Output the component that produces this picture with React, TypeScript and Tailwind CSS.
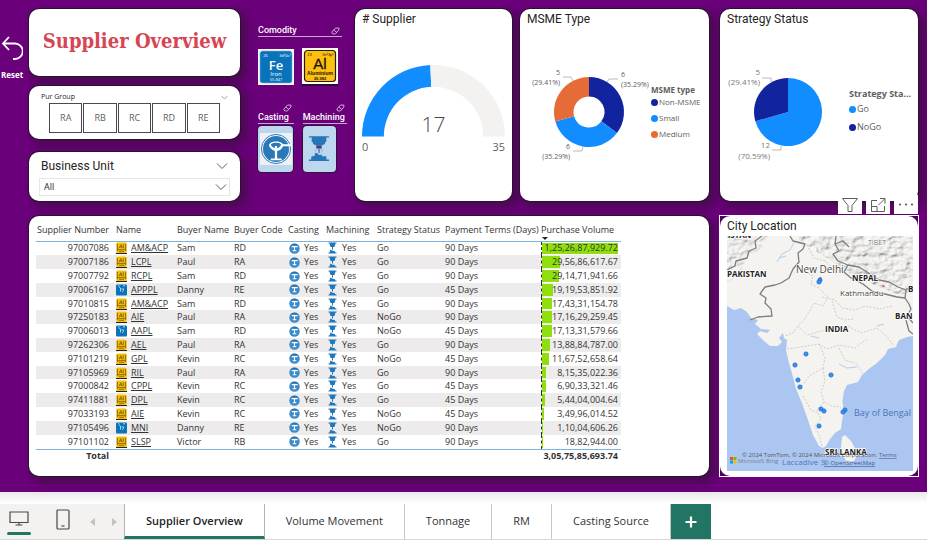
import type { ReactNode } from "react";

const CARD =
  "rounded-[10px] bg-white shadow-[0_0_0_1px_#2a1230,5px_5px_10px_2px_rgba(40,20,40,0.5)]";
const HEADING = "font-[Roboto,sans-serif] text-[12px] leading-[16px] font-normal text-[#252423]";

type Supplier = {
  id: string;
  metal: "al" | "fe";
  name: string;
  buyer: string;
  code: string;
  status: string;
  terms: string;
  volume: string;
};

const row = (
  id: string,
  metal: "al" | "fe",
  name: string,
  buyer: string,
  code: string,
  status: string,
  terms: string,
  volume: string,
): Supplier => ({ id, metal, name, buyer, code, status, terms, volume });

const suppliers: Supplier[] = [
  row("97007086", "al", "AM&ACP", "Sam", "RD", "Go", "90 Days", "1,25,26,87,929.72"),
  row("97007186", "al", "LCPL", "Paul", "RA", "Go", "90 Days", "29,56,86,617.67"),
  row("97007792", "al", "RCPL", "Sam", "RD", "Go", "90 Days", "29,14,71,941.66"),
  row("97006167", "fe", "APPPL", "Danny", "RE", "Go", "45 Days", "19,19,53,851.92"),
  row("97010815", "al", "AM&ACP", "Sam", "RD", "Go", "90 Days", "17,43,31,154.78"),
  row("97250183", "al", "AIE", "Paul", "RA", "NoGo", "90 Days", "17,16,29,259.45"),
  row("97006013", "fe", "AAPL", "Sam", "RD", "NoGo", "45 Days", "17,13,31,579.66"),
  row("97262306", "al", "AEL", "Paul", "RA", "Go", "90 Days", "13,88,84,787.00"),
  row("97101219", "al", "GPL", "Kevin", "RC", "NoGo", "45 Days", "11,67,52,658.64"),
  row("97105969", "al", "RIL", "Paul", "RA", "Go", "90 Days", "8,15,35,022.36"),
  row("97000842", "al", "CPPL", "Kevin", "RC", "Go", "45 Days", "6,90,33,321.46"),
  row("97411881", "al", "DPL", "Kevin", "RC", "Go", "45 Days", "5,44,04,004.64"),
  row("97033193", "al", "AIE", "Kevin", "RC", "NoGo", "45 Days", "3,49,96,014.52"),
  row("97105496", "fe", "MNI", "Danny", "RE", "NoGo", "90 Days", "1,10,04,606.26"),
  row("97101102", "al", "SLSP", "Victor", "RB", "Go", "90 Days", "18,82,944.00"),
];

const MAX_VOLUME = 1252687929.72;
const toNumber = (value: string) => Number(value.replace(/,/g, ""));

/* ---------- icons ---------- */

function Chevron({ className }: { className: string }) {
  return (
    <svg viewBox="0 0 12 8" className={className} fill="none" stroke="#605e5c" aria-hidden="true">
      <path d="M1 1.5 6 6.5 11 1.5" />
    </svg>
  );
}

function Eraser() {
  return (
    <svg viewBox="0 0 10 9" className="h-[8px] w-[9px] shrink-0" fill="none" stroke="#e6d6ea" strokeWidth="0.9" aria-hidden="true">
      <path d="M1 5.6 5 1.2h3.800v2.200L4.800 7.800H2.400L1 6.800zM3 3.400l3.400 2.600" />
    </svg>
  );
}

function MetalIcon({ metal }: { metal: "al" | "fe" }) {
  if (metal === "fe") {
    return (
      <svg viewBox="0 0 11 12" className="h-[12px] w-[11px]" aria-hidden="true">
        <rect width="11" height="11" y="0.500" rx="1" fill="#0b74b8" />
        <path d="M3 3l1.500 1v3.500M6 8l1.500-1.500V4.500M5.500 5h1.500M2 1.800h1.500M7 1.800h2" stroke="#b7def5" strokeWidth="0.900" fill="none" />
      </svg>
    );
  }
  return (
    <svg viewBox="0 0 11 12" className="h-[12px] w-[11px]" aria-hidden="true">
      <rect width="11" height="12" fill="#fff" />
      <rect x="0.3" y="0.4" width="10.4" height="10.6" rx="1" fill="#f4bd0c" />
      <path d="M3.2 6.2 4.8 2.6l1.5 3.600M3.900 5h2M7.300 2.200v4M1.800 7.600h7.400M3 9.300h5M1.400 2v7M9.600 2v7" stroke="#6a5000" strokeWidth="0.700" fill="none" />
      <path d="M0 11.500h11" stroke="#222" />
    </svg>
  );
}

function CastingSmall() {
  return (
    <svg viewBox="0 0 12 12" className="h-[11px] w-[11px]" aria-hidden="true">
      <circle cx="6" cy="6" r="5.700" fill="#3b8bcb" />
      <path d="M3 4h6.500M6 4.500v3.500M4 8.500h4" stroke="#fff" strokeWidth="1.200" fill="none" />
      <path d="M2.500 2.500C4 1.300 8 1.300 9.500 2.500" stroke="#1b66a6" strokeWidth="0.800" fill="none" />
    </svg>
  );
}

function MachiningSmall() {
  return (
    <svg viewBox="0 0 9 12" className="h-[12px] w-[9px]" aria-hidden="true">
      <path d="M0.500 0.500h8v1h-1L6.500 5H2.500L1.500 1.500h-1zM4 5h1v2.500H4zM2.400 7.500l2.200 1.200 2 .2.900 1.600h1v1h-8v-1h1z" fill="#1f78bd" />
    </svg>
  );
}

function IronTile() {
  return (
    <svg viewBox="0 0 36 36" className="size-[36px]" role="img" aria-label="Iron">
      <rect width="36" height="36" fill="#f4f8fb" />
      <rect x="2" y="2" width="32" height="32" rx="2.500" fill="#0873ba" stroke="#7db9de" strokeWidth="0.600" />
      <g fill="#fff" textAnchor="middle" fontFamily="'Open Sans', sans-serif">
        <text x="7.500" y="8" fontSize="4">26</text>
        <text x="27" y="8" fontSize="4">3d⁶4s²</text>
        <text x="18" y="20.500" fontSize="13" fontWeight="600">Fe</text>
        <text x="18" y="27" fontSize="6">Iron</text>
        <text x="18" y="32" fontSize="4">55.847</text>
      </g>
    </svg>
  );
}

function AluminiumTile() {
  return (
    <svg viewBox="0 0 36 38" className="h-[38px] w-[36px]" role="img" aria-label="Aluminium">
      <path d="M0 36h36v2H0z" fill="#2b0a33" />
      <rect width="36" height="36" fill="#fdfdf6" />
      <rect x="2.500" y="2.500" width="31" height="31" rx="3" fill="#fdbf10" stroke="#241c05" strokeWidth="1.200" />
      <g fill="#17120a" textAnchor="middle" fontFamily="'Liberation Sans', Arial, sans-serif">
        <text x="7.500" y="8" fontSize="4">13</text>
        <text x="26" y="8" fontSize="4">3s²3p¹</text>
        <text x="18" y="21" fontSize="15" stroke="#17120a" strokeWidth="0.300">Al</text>
        <text x="18" y="27" fontSize="5" fontWeight="700">Aluminium</text>
        <text x="18" y="32" fontSize="4" fontWeight="700">26.982</text>
      </g>
    </svg>
  );
}

function CastingPicture() {
  return (
    <svg viewBox="0 0 34 34" className="size-[32px]" role="img" aria-label="Casting">
      <rect width="34" height="34" fill="#eef2f6" />
      <circle cx="17" cy="17" r="15.500" fill="none" stroke="#2a78b8" />
      <circle cx="17" cy="17" r="13.800" fill="#2a78b8" />
      <path d="M17 9c5 0 7 2 7.500 3H33v2h-8.500c-1.500 3.500-4 4.500-6.300 5v8H23v2H11.500v-2h4.300v-8c-3-.8-5.500-3-6.300-6C10 10.500 13 9 17 9z" fill="#fff" />
      <path d="M17 10.300c3.500 0 5 1 5.500 2-.6 2-2 3.400-4.300 3.900v-2.500h-2.400v2.500c-2-.6-3.800-2-4.300-3.900.8-1.300 3-2 5.500-2z" fill="#2a78b8" />
    </svg>
  );
}

function MachiningPicture() {
  return (
    <svg viewBox="0 0 24 30" className="h-[28px] w-[22px]" role="img" aria-label="Machining">
      <path d="M1 1h22v1.500h-3V7l-1.500 1v1.500L15.500 11h-7L5.500 9.500V8L4 7V2.500H1zM3.500 26.500v-3l4-1.500v-3l3 1 1.500 1.500 3-.5v2h5v3.500H23V28H1v-1.500z" fill="#2577b9" />
      <path d="M9 11h6v3.500H9z" fill="#4a3f7a" />
      <path d="M11.500 14.500h1.200V19h-1.200zM9 15.500l-1 2M15 15.500l1 2" fill="#4a5f8a" stroke="#6f95bd" strokeWidth="0.700" />
    </svg>
  );
}

/* ---------- cards ---------- */

function ImageFilters() {
  return (
    <div className="min-w-0 pt-[16px] pl-[10px] font-[Roboto,sans-serif] text-[9px] leading-[11px] font-medium text-white">
      <div className="flex w-[84px] items-center justify-between border-b border-[#c9a5d1] pr-[2px]">
        <span>Comodity</span>
        <Eraser />
      </div>
      <div className="mt-[11px] flex gap-[8px]">
        <button type="button"><IronTile /></button>
        <button type="button"><AluminiumTile /></button>
      </div>
      <div className="mt-[18px] flex gap-[9px]">
        <div className="flex w-[37px] flex-col">
          <div className="flex justify-end pr-[2px]"><Eraser /></div>
          <span className="border-b border-[#c9a5d1]">Casting</span>
          <button type="button" className="mt-[2px] flex h-[46px] w-[35px] items-center justify-center rounded-[4px] bg-[#bdd7ee] shadow-[0_0_0_1px_#35103f]">
            <CastingPicture />
          </button>
        </div>
        <div className="flex w-[46px] flex-col">
          <div className="flex justify-end pr-[2px]"><Eraser /></div>
          <span className="border-b border-[#c9a5d1]">Machining</span>
          <button type="button" className="mt-[2px] flex h-[46px] w-[33px] items-center justify-center rounded-[4px] bg-[#bdd7ee] shadow-[0_0_0_1px_#35103f]">
            <MachiningPicture />
          </button>
        </div>
      </div>
    </div>
  );
}

function polar(cx: number, cy: number, r: number, turn: number) {
  const a = turn * 2 * Math.PI;
  return `${(cx + r * Math.sin(a)).toFixed(2)} ${(cy - r * Math.cos(a)).toFixed(2)}`;
}

function slice(cx: number, cy: number, outer: number, inner: number, from: number, to: number) {
  const large = to - from > 0.5 ? 1 : 0;
  return `M${polar(cx, cy, outer, from)}A${outer} ${outer} 0 ${large} 1 ${polar(cx, cy, outer, to)}L${polar(cx, cy, inner, to)}A${inner} ${inner} 0 ${large} 0 ${polar(cx, cy, inner, from)}Z`;
}

function SupplierGauge() {
  const split = -0.25 + (17 / 35) * 0.5;
  return (
    <section className={`${CARD} min-w-0 px-[6px] pt-[2px]`}>
      <h2 className={`${HEADING} pl-[1px]`}># Supplier</h2>
      <svg viewBox="0 0 146 106" className="mt-[29px] w-full" role="img" aria-label="17 of 35 suppliers" fontFamily="'Open Sans', sans-serif">
        <path d={slice(73, 81, 72, 50, -0.25, split)} fill="#118dff" />
        <path d={slice(73, 81, 72, 50, split, 0.25)} fill="#f3f2f1" />
        <text x="73" y="77" fontSize="21" fontWeight="300" textAnchor="middle" fill="#444">17</text>
        <text x="1" y="96" fontSize="11" fill="#605e5c">0</text>
        <text x="145" y="96" fontSize="11" textAnchor="end" fill="#605e5c">35</text>
      </svg>
    </section>
  );
}

function Legend({ title, items, gap, text }: { title: string; items: [string, string][]; gap: string; text: string }) {
  return (
    <div className={`min-w-0 font-['Open_Sans',sans-serif] leading-[12px] whitespace-nowrap text-[#605e5c] ${text}`}>
      <p className="font-bold">{title}</p>
      <ul className={`flex flex-col ${gap}`}>
        {items.map(([label, dot]) => (
          <li key={label} className="flex items-center gap-px">
            <span className={`size-[7px] shrink-0 rounded-full ${dot}`} />
            {label}
          </li>
        ))}
      </ul>
    </div>
  );
}

function MsmeType() {
  return (
    <section className={`${CARD} flex min-w-0 flex-col px-[7px] pt-[2px]`}>
      <h2 className={HEADING}>MSME Type</h2>
      <div className="mt-[35px] flex">
        <svg viewBox="0 0 124 108" className="h-[108px] w-[124px] shrink-0" role="img" aria-label="Suppliers by MSME type" fontFamily="'Open Sans', sans-serif" fontSize="7" fill="#605e5c">
          <path d={slice(62, 50, 35, 15.500, 0, 0.353)} fill="#12239e" />
          <path d={slice(62, 50, 35, 15.500, 0.353, 0.706)} fill="#118dff" />
          <path d={slice(62, 50, 35, 15.500, 0.706, 1)} fill="#e66c37" />
          <path d="M36 15h8l2 4M91 17h-9l-2 3M46 89h9l1-4" fill="none" stroke="#a19f9d" strokeWidth="0.700" />
          <text x="33" y="13" textAnchor="end">5</text>
          <text x="33" y="23" textAnchor="end">(29.41%)</text>
          <text x="94" y="15">6</text>
          <text x="94" y="25">(35.29%)</text>
          <text x="43" y="87" textAnchor="end">6</text>
          <text x="43" y="97" textAnchor="end">(35.29%)</text>
        </svg>
        <div className="pt-[22px]">
          <Legend
            title="MSME type"
            items={[["Non-MSME", "bg-[#12239e]"], ["Small", "bg-[#118dff]"], ["Medium", "bg-[#e66c37]"]]}
            gap="gap-[4px]"
            text="text-[8px]"
          />
        </div>
      </div>
    </section>
  );
}

function StrategyStatus() {
  return (
    <section className={`${CARD} flex min-w-0 flex-col px-[7px] pt-[2px]`}>
      <h2 className={HEADING}>Strategy Status</h2>
      <div className="mt-[35px] flex">
        <svg viewBox="0 0 122 108" className="h-[108px] w-[122px] shrink-0" role="img" aria-label="Suppliers by strategy status" fontFamily="'Open Sans', sans-serif" fontSize="8" fill="#7a7876">
          <path d={slice(61, 50, 34, 0, 0, 0.7059)} fill="#118dff" />
          <path d={slice(61, 50, 34, 0, 0.7059, 1)} fill="#12239e" />
          <path d="M35 16h9v4M45 88h9v-4" fill="none" stroke="#a19f9d" strokeWidth="0.700" />
          <text x="33" y="13" textAnchor="end">5</text>
          <text x="33" y="23" textAnchor="end">(29.41%)</text>
          <text x="43" y="86" textAnchor="end">12</text>
          <text x="43" y="97" textAnchor="end">(70.59%)</text>
        </svg>
        <div className="pt-[26px]">
          <Legend
            title="Strategy Sta..."
            items={[["Go", "bg-[#118dff]"], ["NoGo", "bg-[#12239e]"]]}
            gap="mt-[3px] gap-[6px]"
            text="text-[9px]"
          />
        </div>
      </div>
    </section>
  );
}

const columns: [string, string][] = [
  ["Supplier Number", "w-[76px] pr-[3px] text-right"],
  ["Name", "w-[61px] pl-[4px] text-left"],
  ["Buyer Name", "w-[57px] pl-[4px] text-left"],
  ["Buyer Code", "w-[55px] pl-[4px] text-left"],
  ["Casting", "w-[38px] pl-[3px] text-left"],
  ["Machining", "w-[51px] pl-[3px] text-left"],
  ["Strategy Status", "w-[68px] pl-[3px] text-left"],
  ["Payment Terms (Days)", "w-[99px] pl-[3px] text-left"],
];

function SupplierTable() {
  return (
    <section className={`${CARD} min-w-0 overflow-hidden px-[7px] pt-[4px] pb-[13px]`}>
      <table className="h-[243px] w-[585px] table-fixed border-collapse font-['Open_Sans',sans-serif] text-[9px] leading-[12px] whitespace-nowrap text-[#333]">
        <thead>
          <tr className="h-[21px] border-b border-[#7fb2dd]">
            {columns.map(([title, cls]) => (
              <th key={title} scope="col" className={`font-normal ${cls}`}>{title}</th>
            ))}
            <th scope="col" aria-sort="descending" className="relative w-[80px] text-left font-normal">
              Purchase Volume
              <span className="absolute bottom-px left-px border-x-[3px] border-t-[3px] border-x-transparent border-t-[#222]" />
            </th>
          </tr>
        </thead>
        <tbody>
          {suppliers.map((s) => (
            <tr key={s.id} className="even:bg-[#edebec]">
              <td className="pr-[3px] text-right">{s.id}</td>
              <td className="pl-[4px]">
                <span className="flex items-center gap-[4px]">
                  <MetalIcon metal={s.metal} />
                  <a href="#supplier" className="underline">{s.name}</a>
                </span>
              </td>
              <td className="pl-[4px]">{s.buyer}</td>
              <td className="pl-[4px]">{s.code}</td>
              <td className="pl-[4px]">
                <span className="flex items-center gap-[4px]"><CastingSmall />Yes</span>
              </td>
              <td className="pl-[5px]">
                <span className="flex items-center gap-[5px]"><MachiningSmall />Yes</span>
              </td>
              <td className="pl-[3px]">{s.status}</td>
              <td className="pl-[3px]">{s.terms}</td>
              <td className="relative border-l border-dashed border-[#333] pr-[3px] text-right">
                <span
                  className="absolute inset-y-px left-0 bg-[#8fe00b]"
                  style={{ width: `${(toNumber(s.volume) / MAX_VOLUME) * 96}%` }}
                />
                <span className="relative">{s.volume}</span>
              </td>
            </tr>
          ))}
        </tbody>
        <tfoot>
          <tr className="h-[14px] border-t border-[#7fb2dd] font-bold">
            <td className="pr-[3px] text-right">Total</td>
            <td colSpan={7} />
            <td className="pr-[3px] text-right">3,05,75,85,693.74</td>
          </tr>
        </tfoot>
      </table>
    </section>
  );
}

const pins: [number, number][] = [
  [93, 44], [92, 46], [79, 118], [68, 129], [104, 139], [71, 144],
  [73, 151], [94, 173], [97, 175], [118, 174], [116, 176], [92, 190],
];

function IndiaMap() {
  return (
    <svg viewBox="0 0 186 235" preserveAspectRatio="xMidYMid slice" className="h-[235px] w-full" role="img" aria-label="Supplier cities on a map of India" fontFamily="'Open Sans', sans-serif">
      <defs>
        <filter id="relief" x="0" y="0" width="100%" height="100%">
          <feTurbulence type="fractalNoise" baseFrequency="0.11 0.16" numOctaves="4" seed="8" result="n" />
          <feDiffuseLighting in="n" surfaceScale="5" lightingColor="#fff">
            <feDistantLight azimuth="225" elevation="52" />
          </feDiffuseLighting>
          <feComposite in2="SourceGraphic" operator="in" />
        </filter>
      </defs>
      <rect width="186" height="235" fill="#abc7f1" />
      <path d="M0 0H186V100L180 101 172 104 170 108 169 111 161 113 158 119 150 127 143 132 135 139 131 146 120 149 117 155 115.500 165 116.500 176 115 185 114 193 108 197 103 203 99 210 96 212 92 210 86 199 81 184 75 167 69 153 66 141 62 127 59 114 60 104 57 102 56 97 52 102 55 106 51 110 43 110 37 105 30 98 33 95 40 97 43 94 34 93 28 88 31 84 24 82 20 76 14 72 7 74 0 70Z" fill="#f4f3f0" />
      <path d="M115 201 118 199 124 205 129 214 130 219 127 225 120 226 116 220 114 211Z" fill="#f4f3f0" />
      <path d="M68 0H186V60L170 58 150 50 132 42 120 36 106 26 90 16 80 10Z" fill="#ddd" filter="url(#relief)" opacity="0.38" />
      <path d="M0 0H42L34 12 18 26 12 40 0 46Z" fill="#ddd" filter="url(#relief)" opacity="0.3" />
      <g fill="none" stroke="#7d7d7d" strokeWidth="1.300" strokeLinejoin="round">
        <path d="M0 34 8 30 9 25 20 22 22 15 29 12 28 5 35 0" />
        <path d="M63 0 66 5 78 8 76 13 71 17 72 26 66 33 62 42 54 47 48 49 38 51 33 58 39 62 38 67 44 73 45 80 31 81 23 84" />
        <path d="M109 0 108 8 112 15 106 18 111 25 121 29 117 36 124 42 136 48 146 56 158 58 170 61 178 62 179 54 171 51 162 46 152 44 143 38 132 31 121 29" />
        <path d="M179 53H186M178 62 182 68 184 73 180 80 186 87M179 84 182 95 186 98" />
        <path d="M108 8 116 5 122 11" />
      </g>
      <g fill="none" stroke="#c3c2c0" strokeWidth="0.800" strokeDasharray="2 1.500">
        <path d="M80 9 87 22 98 25 104 30M78 35 86 40 84 48 92 52 101 61 96 70 87 67 82 76 77 84 71 90 66 97 58 100" />
        <path d="M95 61 108 64 115 72 128 74 139 70 152 73 165 70M105 65 110 81 118 84 126 83M71 90 80 99 98 94 108 96 121 90 134 97 150 92 160 101 167 110" />
        <path d="M60 113 68 112 80 110 92 108 100 113 112 109 128 112 140 103M92 108 98 122 96 132 82 140 76 149 70 154M112 112 118 124 130 128 136 138M96 132 98 145 94 156 97 166 104 170 114 171M97 166 90 174 94 183 88 190 92 199 95 210M76 160 84 174 90 177" />
      </g>
      <path d="M50 26 55 18 63 14 67 7M52 22 59 20M112 128 120 132 130 131M84 100 92 102M150 90 157 88" fill="none" stroke="#abc7f1" strokeWidth="0.900" />
      <g fontWeight="700" fill="#222" stroke="#fff" strokeWidth="1.500" paintOrder="stroke" fontSize="8">
        <text x="-2" y="2">IISTAN</text>
        <text x="0" y="41">PAKISTAN</text>
        <text x="125" y="45">NEPAL</text>
        <text x="98" y="96">INDIA</text>
        <text x="168" y="83">BAN</text>
        <text x="181" y="56">B</text>
        <text x="98" y="219">SRI LANKA</text>
      </g>
      <g fill="#444" stroke="#fff" strokeWidth="1.200" paintOrder="stroke">
        <text x="69" y="37" fontSize="10">New Delhi</text>
        <text x="113" y="60" fontSize="8">Kathmandu</text>
        <text x="141" y="9" fontSize="7" fill="#777">TIBET</text>
      </g>
      <circle cx="156.500" cy="50" r="1" fill="#e04a4a" />
      <circle cx="93.500" cy="42" r="1" fill="#d04a4a" />
      <g fill="#4f74b8">
        <text x="127" y="180" fontSize="9">Bay of Bengal</text>
        <text x="55" y="229" fontSize="8">Laccadive</text>
      </g>
      <g fill="#3d8fee" stroke="#1768cf" strokeWidth="0.800">
        {pins.map(([x, y]) => (
          <circle key={`${x}-${y}`} cx={x} cy={y} r="2.100" />
        ))}
      </g>
      <g fontSize="6" fill="#555">
        <text x="15" y="221">© 2024 TomTom, © 2024 Microsoft Corporation.</text>
        <text x="152" y="221" fill="#4a5f8f" textDecoration="underline">Terms</text>
        <text x="97" y="229" fill="#3f5587" textDecoration="underline">© OpenStreetMap</text>
        <text x="11" y="227" fill="#76808f">Microsoft Bing</text>
      </g>
      <text x="94" y="229" fontSize="8" fill="#4f74b8">S</text>
      <path d="M3 221h3v3H3z" fill="#f25022" />
      <path d="M6.500 221h3v3h-3z" fill="#7fba00" />
      <path d="M3 224.500h3v3H3z" fill="#00a4ef" />
      <path d="M6.500 224.500h3v3h-3z" fill="#ffb900" />
    </svg>
  );
}

function VisualAction({ label, children }: { label: string; children: ReactNode }) {
  return (
    <button type="button" aria-label={label} className="flex h-[19px] w-[24px] items-center justify-center bg-white">
      <svg viewBox="0 0 18 16" className="h-[16px] w-[18px]" fill="none" stroke="#605e5c">{children}</svg>
    </button>
  );
}

function CityLocation() {
  return (
    <section className="relative -m-px min-w-0 border border-white bg-[#4a0656]">
      <div className="absolute -top-[21px] right-0 flex gap-[4px]">
        <VisualAction label="Filters">
          <path d="M1.500 1.500h15l-5.500 7v6H7v-6z" />
        </VisualAction>
        <VisualAction label="Focus mode">
          <path d="M8 3.500H2.500v11h13V9M2.500 9.500h5.500v5M9.500 8l6-6M11 1.500h5v5" />
        </VisualAction>
        <VisualAction label="More options">
          <path d="M3 7.500h.1M9 7.500h.1M15 7.500h.1" strokeWidth="2.200" strokeLinecap="round" />
        </VisualAction>
      </div>
      <div className="h-full rounded-[10px] bg-white pt-[2px] pr-[5px] pb-[4px] pl-[7px]">
        <h2 className={`${HEADING} mb-[2px]`}>City Location</h2>
        <IndiaMap />
      </div>
    </section>
  );
}

/* ---------- page ---------- */

const tabs = ["Supplier Overview", "Volume Movement", "Tonnage", "RM", "Casting Source"];

function PageTabs() {
  return (
    <footer className="font-['Open_Sans',sans-serif]">
      <div className="h-[12px] bg-linear-to-b from-[#e9e9e9] to-white" />
      <nav aria-label="Pages" className="flex h-[36px] border-b border-[#d8d8d8] text-[11px] whitespace-nowrap text-[#333]">
        <div className="flex w-[124px] shrink-0 items-start bg-[#f3f2f1]">
          <button type="button" aria-label="Desktop layout" className="ml-[7px] flex w-[24px] flex-col items-center pt-[7px]">
            <svg viewBox="0 0 20 15" className="h-[15px] w-[20px]" fill="none" stroke="#484644" strokeWidth="1.200" aria-hidden="true">
              <path d="M1 1h18v10.500H1zM10 11.500V14M6.500 14h7" />
            </svg>
            <span className="mt-[6px] h-[3px] w-full rounded-full bg-[#217562]" />
          </button>
          <button type="button" aria-label="Mobile layout" className="ml-[25px] pt-[5px]">
            <svg viewBox="0 0 14 21" className="h-[21px] w-[14px]" fill="none" stroke="#484644" strokeWidth="1.200" aria-hidden="true">
              <rect x="1" y="1" width="12" height="19" rx="1" />
              <path d="M5.500 17h3" />
            </svg>
          </button>
          <div className="ml-[20px] flex gap-[17px] pt-[14px]">
            <button type="button" aria-label="Previous page" className="border-y-[4px] border-r-[5px] border-y-transparent border-r-[#c4c2c0]" />
            <button type="button" aria-label="Next page" className="border-y-[4px] border-l-[5px] border-y-transparent border-l-[#c4c2c0]" />
          </div>
        </div>
        {tabs.map((tab, i) => (
          <button
            key={tab}
            type="button"
            className={
              i === 0
                ? "border-x border-b-[3px] border-x-[#b5b3b1] border-b-[#217562] bg-white px-[21px] pt-[3px] font-semibold text-[#252423]"
                : "border-r border-[#c8c6c4] bg-white px-[21px]"
            }
          >
            {tab}
          </button>
        ))}
        <button type="button" aria-label="New page" className="flex w-[40px] items-center justify-center bg-[#217562]">
          <svg viewBox="0 0 12 12" className="size-[12px]" stroke="#fff" strokeWidth="2.200" aria-hidden="true">
            <path d="M6 0.500v11M0.500 6h11" />
          </svg>
        </button>
      </nav>
    </footer>
  );
}

export default function App() {
  return (
    <div className="flex min-h-screen flex-col bg-white">
      <main className="flex bg-[#6b007b] pt-[9px] pr-[9px] pb-[16px]">
        <div className="w-[29px] shrink-0 pt-[26px]">
          <button type="button" className="flex flex-col items-start pl-px font-['Open_Sans',sans-serif] text-[8px] leading-[12px] font-bold text-white">
            <svg viewBox="0 0 22 26" className="mb-[8px] h-[26px] w-[22px]" fill="none" stroke="#fff" strokeWidth="1.800" aria-hidden="true">
              <path d="M8 2 2 8.500 8 15M2.500 8.500H14a7.500 7.500 0 0 1 0 15.500h-2" />
            </svg>
            Reset
          </button>
        </div>
        <div className="grid min-w-0 flex-1 grid-cols-[minmax(0,680fr)_minmax(0,198fr)] gap-x-[11px] gap-y-[15px]">
          <div className="grid grid-cols-[211fr_99fr_157fr_189fr] gap-[8px]">
            <div className="flex min-w-0 flex-col">
              <header className={`${CARD} flex h-[67px] items-center justify-center pb-[4px]`}>
                <h1 className="font-['DejaVu_Serif_Condensed','DejaVu_Serif',serif] text-[20px] leading-[28px] font-bold whitespace-nowrap text-[#d64554]">Supplier Overview</h1>
              </header>
              <fieldset className={`${CARD} mt-[10px] h-[53px] px-[12px] pt-[5px] font-['Open_Sans',sans-serif]`}>
                <div className="flex h-[12px] items-center justify-between text-[7px] text-[#252423]">
                  <span>Pur Group</span>
                  <Chevron className="h-[5px] w-[7px]" />
                </div>
                <div className="mx-auto flex w-[171px] gap-px text-[9px] text-[#605e5c]">
                  {["RA", "RB", "RC", "RD", "RE"].map((g) => (
                    <button key={g} type="button" className="h-[30px] flex-1 border border-[#4a4a4a]">{g}</button>
                  ))}
                </div>
              </fieldset>
              <div className={`${CARD} mt-[13px] h-[49px] px-[10px] pt-[6px]`}>
                <div className="flex items-center justify-between px-[2px]">
                  <label htmlFor="business-unit" className={HEADING}>Business Unit</label>
                  <Chevron className="h-[8px] w-[12px]" />
                </div>
                <div className="relative mt-[4px]">
                  <select id="business-unit" className="block h-[18px] w-full appearance-none border border-[#e6e6e6] bg-white pl-[4px] font-['Open_Sans',sans-serif] text-[9px] leading-[16px] text-[#252423]">
                    <option>All</option>
                  </select>
                  <Chevron className="pointer-events-none absolute top-[5px] right-[3px] h-[8px] w-[12px]" />
                </div>
              </div>
            </div>
            <ImageFilters />
            <SupplierGauge />
            <MsmeType />
          </div>
          <StrategyStatus />
          <SupplierTable />
          <CityLocation />
        </div>
      </main>
      <PageTabs />
    </div>
  );
}
